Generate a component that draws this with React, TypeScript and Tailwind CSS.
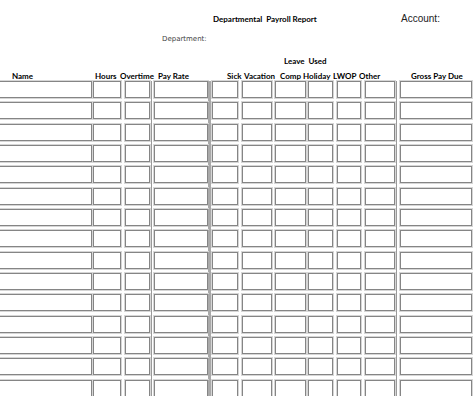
import React from 'react';

// Column boxes of one payroll row: margin-left + width, laid out by flow
const cells: { kind: 'box' | 'line' | 'bar'; cls: string }[] = [
  { kind: 'box', cls: '-ml-[2px] w-[94px]' },   // Name
  { kind: 'box', cls: 'ml-[1px] w-[28px]' },    // Hours
  { kind: 'box', cls: 'ml-[4px] w-[25px]' },    // Overtime
  { kind: 'line', cls: 'ml-[1px] w-[1px]' },
  { kind: 'box', cls: 'ml-[2px] w-[54px]' },    // Pay Rate
  { kind: 'bar', cls: 'w-[3px]' },
  { kind: 'box', cls: 'ml-[1px] w-[26px]' },    // Sick
  { kind: 'box', cls: 'ml-[4px] w-[30px]' },    // Vacation
  { kind: 'box', cls: 'ml-[3px] w-[31px]' },    // Comp
  { kind: 'box', cls: 'ml-[2px] w-[25px]' },    // Holiday
  { kind: 'box', cls: 'ml-[4px] w-[24px]' },    // LWOP
  { kind: 'box', cls: 'ml-[4px] w-[30px]' },    // Other
  { kind: 'line', cls: 'ml-[1px] w-[1px]' },
  { kind: 'box', cls: 'ml-[3px] w-[72px]' },    // Gross Pay Due
];

const headers: { label: string; cls: string }[] = [
  { label: 'Name', cls: 'w-[83px]' },
  { label: 'Hours', cls: 'w-[25px]' },
  { label: 'Overtime', cls: 'w-[38px]' },
  { label: 'Pay Rate', cls: 'w-[69px]' },
  { label: 'Sick', cls: 'w-[17px]' },
  { label: 'Vacation', cls: 'w-[36px]' },
  { label: 'Comp Holiday', cls: 'w-[53px]' },
  { label: 'LWOP', cls: 'w-[26px]' },
  { label: 'Other', cls: 'w-[52px]' },
  { label: 'Gross Pay Due', cls: 'w-[60px]' },
];

function Row() {
  return (
    <div className="flex h-[21.33px] items-start">
      {cells.map((c, i) => {
        if (c.kind === 'line') return <div key={i} className={`${c.cls} h-full shrink-0 bg-[#9a9a9a]`} />;
        if (c.kind === 'bar') return <div key={i} className={`${c.cls} h-full shrink-0 bg-[#a9a9a9]`} />;
        return (
          <div
            key={i}
            className={`${c.cls} h-[17px] shrink-0 border border-[#858585] bg-white shadow-[0_0_0_1px_#d6d6d6]`}
          />
        );
      })}
    </div>
  );
}

export default function App() {
  return (
    <div className="w-[474px] h-[396px] overflow-hidden bg-white text-black font-['Lato',sans-serif]">
      {/* Title + account */}
      <div className="h-[28px] pt-[10px] pl-[213px] flex items-center">
        <div className="w-[188px] text-[8px] leading-[10px] font-bold whitespace-nowrap">
          Departmental&nbsp; Payroll Report
        </div>
        <div className="text-[10px] leading-[10px] text-[#222] font-['Liberation_Sans',sans-serif] whitespace-nowrap">
          Account:
        </div>
      </div>

      {/* Department */}
      <div className="h-[22px] pt-[6px] pl-[162px]">
        <div className="text-[7px] leading-[10px] text-[#444] font-['DejaVu_Sans',sans-serif]">Department:</div>
      </div>

      {/* Leave used */}
      <div className="h-[16px] pt-[6px] pl-[284px]">
        <div className="text-[8px] leading-[10px] font-bold">Leave&nbsp; Used</div>
      </div>

      {/* Column headers */}
      <div className="h-[15px] pt-[5px] pl-[12px] flex">
        {headers.map(h => (
          <div key={h.label} className={`${h.cls} shrink-0 text-[8px] leading-[10px] font-bold whitespace-nowrap`}>
            {h.label}
          </div>
        ))}
      </div>

      {/* Rows */}
      <div className="flex flex-col">
        {Array.from({ length: 15 }).map((_, i) => (
          <Row key={i} />
        ))}
      </div>
    </div>
  );
}
